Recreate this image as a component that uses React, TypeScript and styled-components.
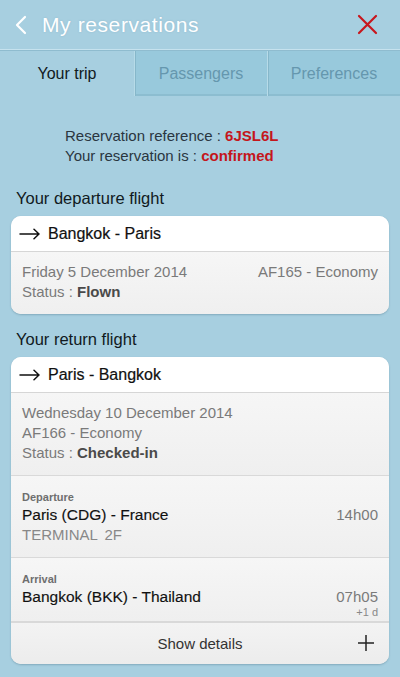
import React from "react";
import styled, { createGlobalStyle } from "styled-components";

const Global = createGlobalStyle`
  html, body { margin: 0; padding: 0; }
  body {
    background: #a7cfe0;
    font-family: "Liberation Sans", Arial, sans-serif;
    -webkit-font-smoothing: antialiased;
  }
`;

const Page = styled.div`
  width: 400px;
  min-height: 677px;
  background: #a7cfe0;
  display: flex;
  flex-direction: column;
`;

const Header = styled.header`
  height: 50px;
  display: flex;
  align-items: center;
  padding: 0 22px 0 14px;
  box-sizing: border-box;
  border-bottom: 1px solid #c6e2ee;
  box-shadow: 0 1px 0 #8fbccf;
`;

const IconButton = styled.button`
  background: none;
  border: 0;
  padding: 0;
  display: flex;
  align-items: center;
  justify-content: center;
  cursor: pointer;
`;

const Title = styled.h1`
  margin: 1px 0 0 14px;
  flex: 1;
  font-size: 21px;
  font-weight: 400;
  color: #ffffff;
  letter-spacing: 0.6px;
  text-shadow: 0 0 2px rgba(80, 130, 160, 0.25);
`;

const Tabs = styled.nav`
  display: grid;
  grid-template-columns: 134px 133px 133px;
  height: 45px;
  margin-top: 1px;
`;

const Tab = styled.div<{ $active?: boolean }>`
  display: flex;
  align-items: center;
  justify-content: center;
  font-size: 16px;
  color: ${(p) => (p.$active ? "#111a22" : "#6597ae")};
  background: ${(p) => (p.$active ? "transparent" : "#98c9dc")};
  border-left: ${(p) => (p.$active ? "0" : "1px solid #b7dbe8")};
  box-shadow: ${(p) =>
    p.$active ? "none" : "inset 1px 0 0 #86b7ca, inset 0 -2px 0 #8cbdd0"};
`;

const Reservation = styled.div`
  padding: 30px 0 0 65px;
  font-size: 15px;
  line-height: 20px;
  color: #2a3640;
`;

const Red = styled.span`
  color: #c4161c;
  font-weight: 700;
`;

const SectionTitle = styled.h2<{ $gap: number }>`
  margin: ${(p) => p.$gap}px 0 0;
  padding: 0 16px;
  font-size: 16.5px;
  font-weight: 400;
  color: #111a22;
  line-height: 20px;
`;

const Card = styled.section`
  margin: 8px 11px 0;
  background: #f2f2f2;
  border-radius: 10px;
  overflow: hidden;
  box-shadow: 0 1px 2px rgba(60, 100, 120, 0.35);
`;

const RouteRow = styled.div`
  height: 35px;
  display: flex;
  align-items: center;
  padding: 0 8px;
  background: #ffffff;
  border-bottom: 1px solid #d6d6d6;
  font-size: 16px;
  color: #111;
  -webkit-text-stroke: 0.2px #111;
`;

const RouteText = styled.span`
  margin-left: 8px;
`;

const Block = styled.div<{ $pad?: string }>`
  padding: ${(p) => p.$pad || "11px 11px 10px"};
  background: linear-gradient(#f6f6f6, #efefef);
  border-bottom: 1px solid #d9d9d9;
  &:last-child { border-bottom: 0; }
`;

const Line = styled.div`
  display: flex;
  justify-content: space-between;
  font-size: 15px;
  line-height: 20px;
  color: #7a7a7a;
`;

const Strong = styled.span`
  color: #4a4a4a;
  font-weight: 700;
`;

const Label = styled.div`
  font-size: 11px;
  font-weight: 700;
  color: #6e6e6e;
  line-height: 14px;
`;

const Place = styled.div`
  display: flex;
  justify-content: space-between;
  align-items: baseline;
  font-size: 15.5px;
  line-height: 21px;
  color: #111;
  -webkit-text-stroke: 0.15px #111;
`;

const Time = styled.span`
  color: #7a7a7a;
  font-size: 15px;
  -webkit-text-stroke: 0;
`;

const Sub = styled.div`
  font-size: 15px;
  color: #888;
  line-height: 20px;
  word-spacing: 3px;
`;

const Extra = styled.div`
  text-align: right;
  font-size: 11px;
  color: #888;
  line-height: 10px;
`;

const Footer = styled.div`
  height: 41px;
  display: flex;
  align-items: center;
  justify-content: center;
  position: relative;
  background: linear-gradient(#f3f3f3, #ececec);
  font-size: 15px;
  color: #333;
  border-top: 1px solid #d9d9d9;
`;

const Plus = styled.span`
  position: absolute;
  right: 15px;
  top: 12px;
  display: flex;
`;

const Arrow = () => (
  <svg width="21" height="12" viewBox="0 0 21 12" fill="none" stroke="#111" strokeWidth="1.5" strokeLinecap="round">
    <path d="M1 6H20M15 1.2L20 6L15 10.8" />
  </svg>
);

export default function App() {
  return (
    <Page>
      <Global />
      <Header>
        <IconButton aria-label="Back">
          <svg width="14" height="20" viewBox="0 0 14 20" fill="none" stroke="#fff" strokeWidth="2.2" strokeLinecap="round" strokeLinejoin="round">
            <path d="M11 2L3 10L11 18" />
          </svg>
        </IconButton>
        <Title>My reservations</Title>
        <IconButton aria-label="Close">
          <svg width="21" height="21" viewBox="0 0 21 21" fill="none" stroke="#c8161d" strokeWidth="2.2" strokeLinecap="round">
            <path d="M2 2L19 19M19 2L2 19" />
          </svg>
        </IconButton>
      </Header>
      <Tabs>
        <Tab $active>Your trip</Tab>
        <Tab>Passengers</Tab>
        <Tab>Preferences</Tab>
      </Tabs>
      <Reservation>
        <div>Reservation reference : <Red>6JSL6L</Red></div>
        <div>Your reservation is : <Red>confirmed</Red></div>
      </Reservation>

      <SectionTitle $gap={22}>Your departure flight</SectionTitle>
      <Card>
        <RouteRow>
          <Arrow />
          <RouteText>Bangkok - Paris</RouteText>
        </RouteRow>
        <Block $pad="10px 11px 12px">
          <Line>
            <span>Friday 5 December 2014</span>
            <span>AF165 - Economy</span>
          </Line>
          <Line>
            <span>Status : <Strong>Flown</Strong></span>
          </Line>
        </Block>
      </Card>

      <SectionTitle $gap={15}>Your return flight</SectionTitle>
      <Card>
        <RouteRow>
          <Arrow />
          <RouteText>Paris - Bangkok</RouteText>
        </RouteRow>
        <Block $pad="10px 11px 12px">
          <Line><span>Wednesday 10 December 2014</span></Line>
          <Line><span>AF166 - Economy</span></Line>
          <Line><span>Status : <Strong>Checked-in</Strong></span></Line>
        </Block>
        <Block $pad="14px 11px 12px">
          <Label>Departure</Label>
          <Place>
            <span>Paris (CDG) - France</span>
            <Time>14h00</Time>
          </Place>
          <Sub>TERMINAL 2F</Sub>
        </Block>
        <Block $pad="14px 11px 4px">
          <Label>Arrival</Label>
          <Place>
            <span>Bangkok (BKK) - Thailand</span>
            <Time>07h05</Time>
          </Place>
          <Extra>+1 d</Extra>
        </Block>
        <Footer>
          Show details
          <Plus>
            <svg width="16" height="16" viewBox="0 0 16 16" fill="none" stroke="#222" strokeWidth="1.5">
              <path d="M8 0V16M0 8H16" />
            </svg>
          </Plus>
        </Footer>
      </Card>
    </Page>
  );
}
